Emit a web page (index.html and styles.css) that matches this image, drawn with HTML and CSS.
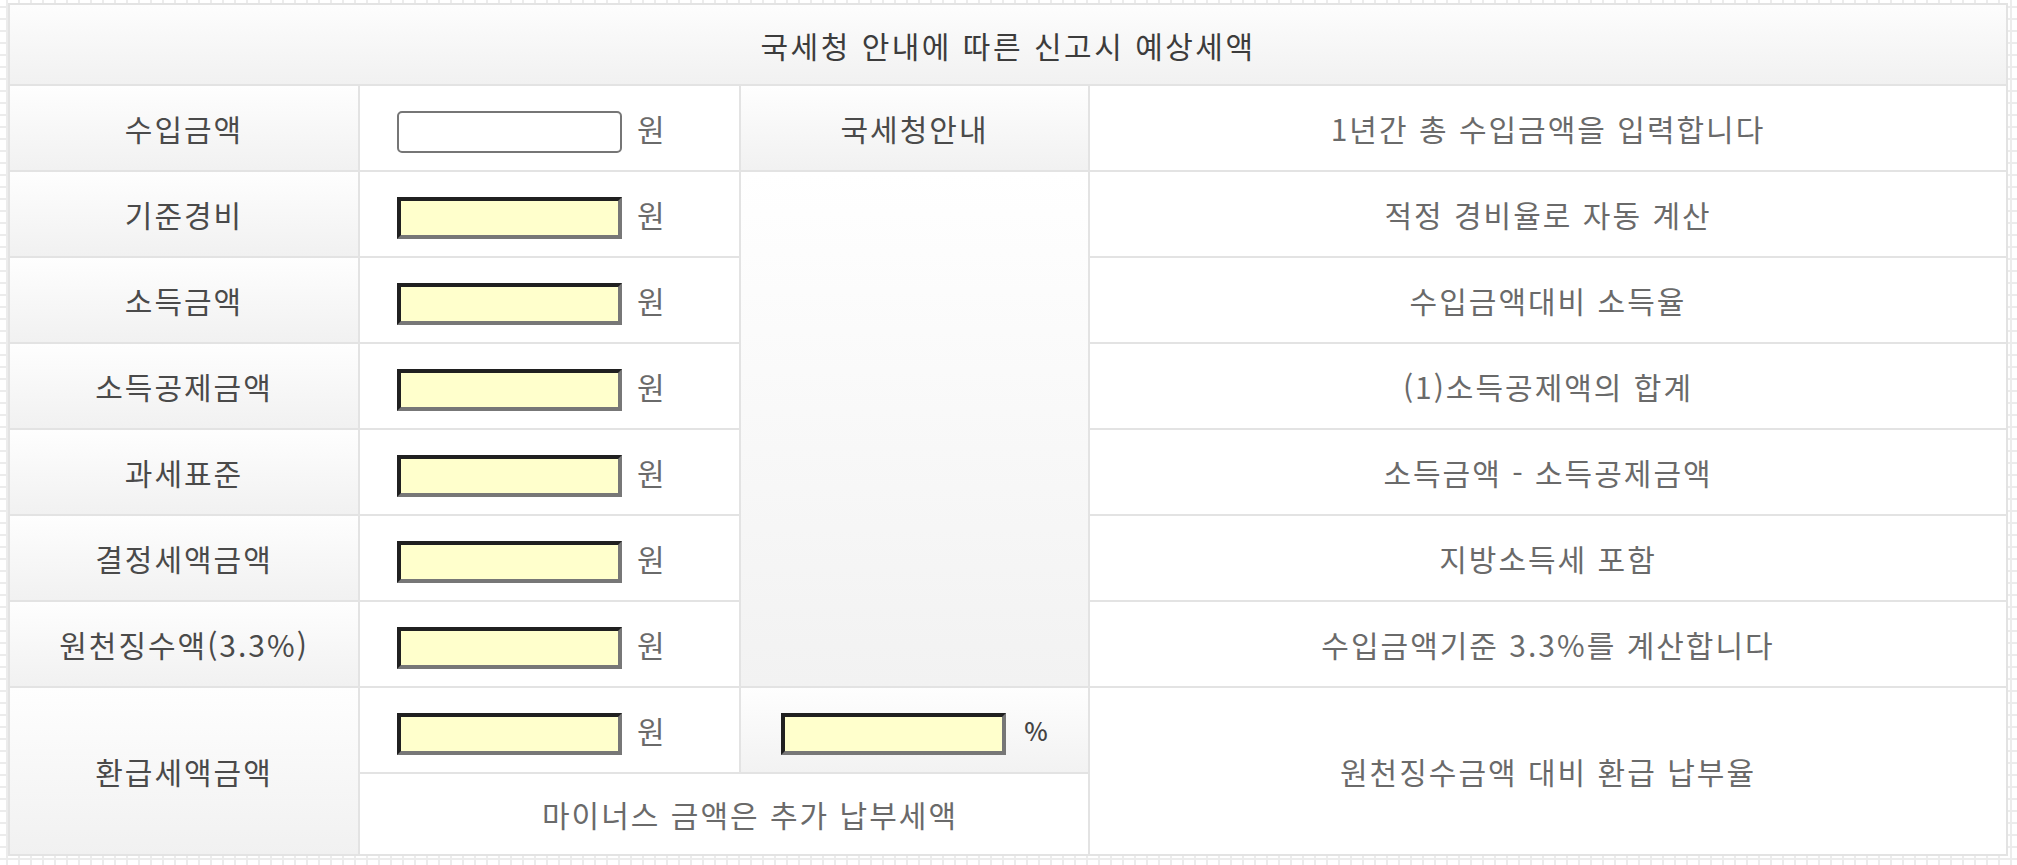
FILE: index.html
```html
<!DOCTYPE html>
<html lang="ko">
<head>
    <meta charset="utf-8">
    <title>국세청 안내에 따른 신고시 예상세액</title>
    <link rel="stylesheet" href="styles.css">
</head>
<body>
    <div class="calc">
        <div class="cell title">국세청 안내에 따른 신고시 예상세액</div>

        <!-- 수입금액 -->
        <div class="cell label">수입금액</div>
        <div class="cell value"><input type="text" class="amount"><span class="unit">원</span></div>
        <div class="cell guide">국세청안내</div>
        <div class="cell desc">1년간 총 수입금액을 입력합니다</div>

        <div class="cell label">기준경비</div>
        <div class="cell value"><input type="text" class="result" readonly><span class="unit">원</span></div>
        <div class="cell blank tall6"></div>
        <div class="cell desc">적정 경비율로 자동 계산</div>

        <div class="cell label">소득금액</div>
        <div class="cell value"><input type="text" class="result" readonly><span class="unit">원</span></div>
        <div class="cell desc">수입금액대비 소득율</div>

        <div class="cell label">소득공제금액</div>
        <div class="cell value"><input type="text" class="result" readonly><span class="unit">원</span></div>
        <div class="cell desc">(1)소득공제액의 합계</div>

        <div class="cell label">과세표준</div>
        <div class="cell value"><input type="text" class="result" readonly><span class="unit">원</span></div>
        <div class="cell desc">소득금액 - 소득공제금액</div>

        <div class="cell label">결정세액금액</div>
        <div class="cell value"><input type="text" class="result" readonly><span class="unit">원</span></div>
        <div class="cell desc">지방소득세 포함</div>

        <div class="cell label">원천징수액(3.3%)</div>
        <div class="cell value"><input type="text" class="result" readonly><span class="unit">원</span></div>
        <div class="cell desc">수입금액기준 3.3%를 계산합니다</div>

        <!-- 환급세액 -->
        <div class="cell label tall2">환급세액금액</div>
        <div class="cell value"><input type="text" class="result" readonly><span class="unit">원</span></div>
        <div class="cell rate"><input type="text" class="result" readonly><span class="pct">%</span></div>
        <div class="cell desc tall2">원천징수금액 대비 환급 납부율</div>
        <div class="cell note wide2">마이너스 금액은 추가 납부세액</div>
    </div>
</body>
</html>
```

FILE: styles.css
```css
* {
    margin: 0;
    padding: 0;
    box-sizing: border-box;
}
body {
    margin: 3px 8px 0;
    height: 865px;
    overflow: hidden;
    font-family: "Noto Sans CJK KR", "Noto Sans", sans-serif;
    background-color: #fff;
    background-image: linear-gradient(#ececec 2px, transparent 2px),
        linear-gradient(90deg, #ececec 2px, transparent 2px);
    background-size: 12px 12px;
    background-position: 6px 6px;
}
.calc {
    display: grid;
    width: 2000px;
    grid-template-columns: 348px 379px 347px 916px;
    grid-template-rows: 79px repeat(8, 84px) 80px;
    gap: 2px;
    padding: 2px;
    background: #e3e3e3;
}
.cell {
    display: flex;
    align-items: center;
    justify-content: center;
    background: #fff;
    font-size: 30px;
}
.title {
    grid-column: 1 / -1;
    color: #3c3c3c;
    letter-spacing: 2.5px;
    background: linear-gradient(#fdfdfd, #f1f1f1);
}
.label,
.guide {
    color: #4a4a4a;
    letter-spacing: 2px;
    background: linear-gradient(#fefefe, #f1f1f1);
}
.blank {
    background: linear-gradient(#fff, #f2f2f2);
}
.tall6 {
    grid-row: span 6;
}
.tall2 {
    grid-row: span 2;
}
.wide2 {
    grid-column: span 2;
}
.value {
    justify-content: flex-start;
    padding-left: 37px;
}
.desc,
.note {
    color: #6a6a6a;
    letter-spacing: 2px;
}
.note {
    padding-left: 52px;
}
.rate {
    background: linear-gradient(#fefefe, #f2f2f2);
}
input {
    width: 225px;
    height: 42px;
    margin-top: 8px;
    font-size: 20px;
    outline: none;
}
input.amount {
    border: 2px solid #767676;
    border-radius: 5px;
    background: #fff;
}
input.result {
    border: 4px solid;
    border-color: #202020 #777 #777 #202020;
    background: #ffffcc;
}
.unit {
    margin-left: 15px;
    color: #6a6a6a;
}
.pct {
    margin-left: 18px;
    color: #444;
    font-size: 25px;
    font-weight: 500;
}
```
